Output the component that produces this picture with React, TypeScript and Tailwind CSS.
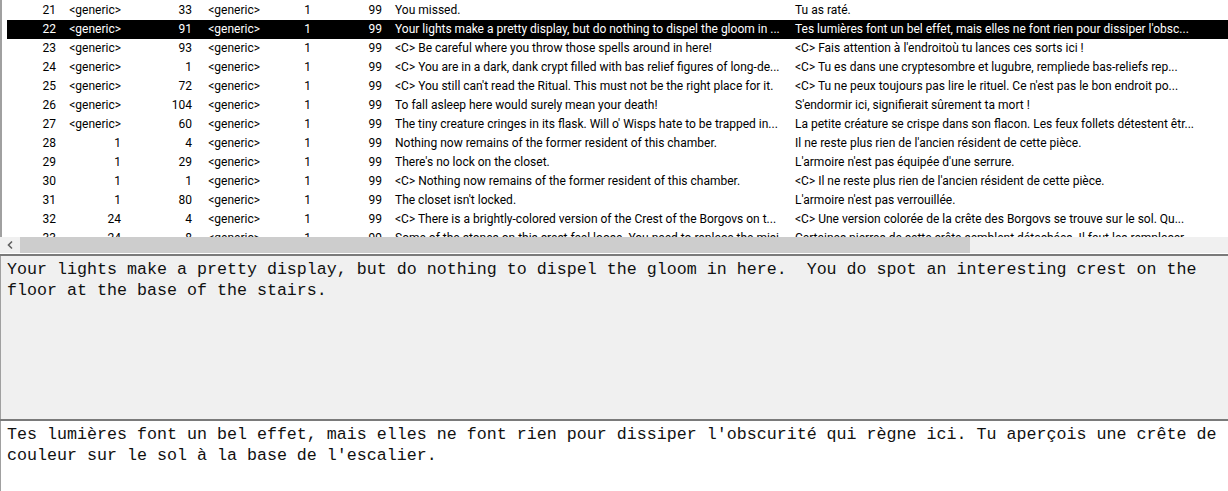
import React from "react";

type Row = {
  id: string;
  a: string;
  b: string;
  c: string;
  d: string;
  e: string;
  en: string;
  fr: string;
};

const rows: Row[] = [
  { id: "21", a: "<generic>", b: "33", c: "<generic>", d: "1", e: "99", en: "You missed.", fr: "Tu as raté." },
  {
    id: "22",
    a: "<generic>",
    b: "91",
    c: "<generic>",
    d: "1",
    e: "99",
    en: "Your lights make a pretty display, but do nothing to dispel the gloom in ...",
    fr: "Tes lumières font un bel effet, mais elles ne font rien pour dissiper l'obsc...",
  },
  {
    id: "23",
    a: "<generic>",
    b: "93",
    c: "<generic>",
    d: "1",
    e: "99",
    en: "<C> Be careful where you throw those spells around in here!",
    fr: "<C> Fais attention à l'endroitoù tu lances ces sorts ici !",
  },
  {
    id: "24",
    a: "<generic>",
    b: "1",
    c: "<generic>",
    d: "1",
    e: "99",
    en: "<C> You are in a dark, dank crypt filled with bas relief figures of long-de...",
    fr: "<C> Tu es dans une cryptesombre et lugubre, rempliede bas-reliefs rep...",
  },
  {
    id: "25",
    a: "<generic>",
    b: "72",
    c: "<generic>",
    d: "1",
    e: "99",
    en: "<C> You still can't read the Ritual.  This must not be the right place for it.",
    fr: "<C> Tu ne peux toujours pas lire le rituel. Ce n'est pas le bon endroit po...",
  },
  {
    id: "26",
    a: "<generic>",
    b: "104",
    c: "<generic>",
    d: "1",
    e: "99",
    en: "To fall asleep here would surely mean your death!",
    fr: "S'endormir ici, signifierait sûrement ta mort !",
  },
  {
    id: "27",
    a: "<generic>",
    b: "60",
    c: "<generic>",
    d: "1",
    e: "99",
    en: "The tiny creature cringes in its flask.  Will o' Wisps hate to be trapped in...",
    fr: "La petite créature se crispe dans son flacon. Les feux follets détestent êtr...",
  },
  {
    id: "28",
    a: "1",
    b: "4",
    c: "<generic>",
    d: "1",
    e: "99",
    en: "Nothing now remains of the former resident of this chamber.",
    fr: "Il ne reste plus rien de l'ancien résident de cette pièce.",
  },
  {
    id: "29",
    a: "1",
    b: "29",
    c: "<generic>",
    d: "1",
    e: "99",
    en: "There's no lock on the closet.",
    fr: "L'armoire n'est pas équipée d'une serrure.",
  },
  {
    id: "30",
    a: "1",
    b: "1",
    c: "<generic>",
    d: "1",
    e: "99",
    en: "<C> Nothing now remains of the former resident of this chamber.",
    fr: "<C> Il ne reste plus rien de l'ancien résident de cette pièce.",
  },
  {
    id: "31",
    a: "1",
    b: "80",
    c: "<generic>",
    d: "1",
    e: "99",
    en: "The closet isn't locked.",
    fr: "L'armoire n'est pas verrouillée.",
  },
  {
    id: "32",
    a: "24",
    b: "4",
    c: "<generic>",
    d: "1",
    e: "99",
    en: "<C> There is a brightly-colored version of the Crest of the Borgovs on t...",
    fr: "<C> Une version colorée de la crête des Borgovs se trouve sur le sol. Qu...",
  },
  {
    id: "33",
    a: "24",
    b: "8",
    c: "<generic>",
    d: "1",
    e: "99",
    en: "Some of the stones on this crest feel loose.  You need to replace the misi...",
    fr: "Certaines pierres de cette crête semblent détachées. Il faut les remplacer...",
  },
];

function ListRow({ row, selected }: { row: Row; selected: boolean }) {
  return (
    <div
      className={
        selected
          ? "flex h-[19px] leading-[19px] whitespace-nowrap bg-black text-white"
          : "flex h-[19px] leading-[19px] whitespace-nowrap text-black"
      }
    >
      <div className="w-[53px] shrink-0 text-right pr-[4px]">{row.id}</div>
      <div className="w-[66px] shrink-0 text-right pr-[5px]">{row.a}</div>
      <div className="w-[70px] shrink-0 text-right pr-[4px]">{row.b}</div>
      <div className="w-[68px] shrink-0 text-right pr-[4px]">{row.c}</div>
      <div className="w-[51px] shrink-0 text-right pr-[4px]">{row.d}</div>
      <div className="w-[72px] shrink-0 text-right pr-[5px]">{row.e}</div>
      <div className="w-[402px] shrink-0 pl-[8px] overflow-hidden">{row.en}</div>
      <div className="flex-1 pl-[6px] overflow-hidden">{row.fr}</div>
    </div>
  );
}

function HScrollBar() {
  return (
    <div className="flex h-[16px] bg-[#f0f0f0]">
      <div className="w-[17px] shrink-0 flex items-center justify-center">
        <svg width="17" height="16" viewBox="0 0 17 16">
          <path d="M12 4.5 L8.5 8 L12 11.5" fill="none" stroke="#606060" strokeWidth="1.6" />
        </svg>
      </div>
      <div className="w-[3px] shrink-0" />
      <div className="w-[950px] shrink-0 bg-[#cdcdcd]" />
      <div className="flex-1" />
    </div>
  );
}

export default function App() {
  return (
    <div className="w-[1228px] h-[491px] overflow-hidden bg-white flex flex-col">
      <div className="h-[237px] shrink-0 border-l-2 border-[#a0a0a0] pl-[5px] pt-px overflow-hidden font-['Roboto',sans-serif] text-[12px]">
        {rows.map((r) => (
          <ListRow key={r.id} row={r} selected={r.id === "22"} />
        ))}
      </div>
      <HScrollBar />
      <div className="h-px shrink-0 bg-white" />
      <div className="h-[2px] shrink-0 bg-[#7a7a7a]" />
      <div className="h-[163px] shrink-0 bg-[#f0f0f0] border-l border-[#a0a0a0] pl-[6px] pt-[3px] font-['Liberation_Mono',monospace] text-[16.67px] leading-[21px] text-[#111]">
        <p>Your lights make a pretty display, but do nothing to dispel the gloom in here.&nbsp; You do spot an interesting crest on the</p>
        <p>floor at the base of the stairs.</p>
      </div>
      <div className="h-[2px] shrink-0 bg-[#7a7a7a]" />
      <div className="flex-1 bg-white border-l border-[#a0a0a0] pl-[6px] pt-[3px] font-['Liberation_Mono',monospace] text-[16.67px] leading-[21px] text-[#111]">
        <p>Tes lumières font un bel effet, mais elles ne font rien pour dissiper l'obscurité qui règne ici. Tu aperçois une crête de</p>
        <p>couleur sur le sol à la base de l'escalier.</p>
      </div>
    </div>
  );
}
